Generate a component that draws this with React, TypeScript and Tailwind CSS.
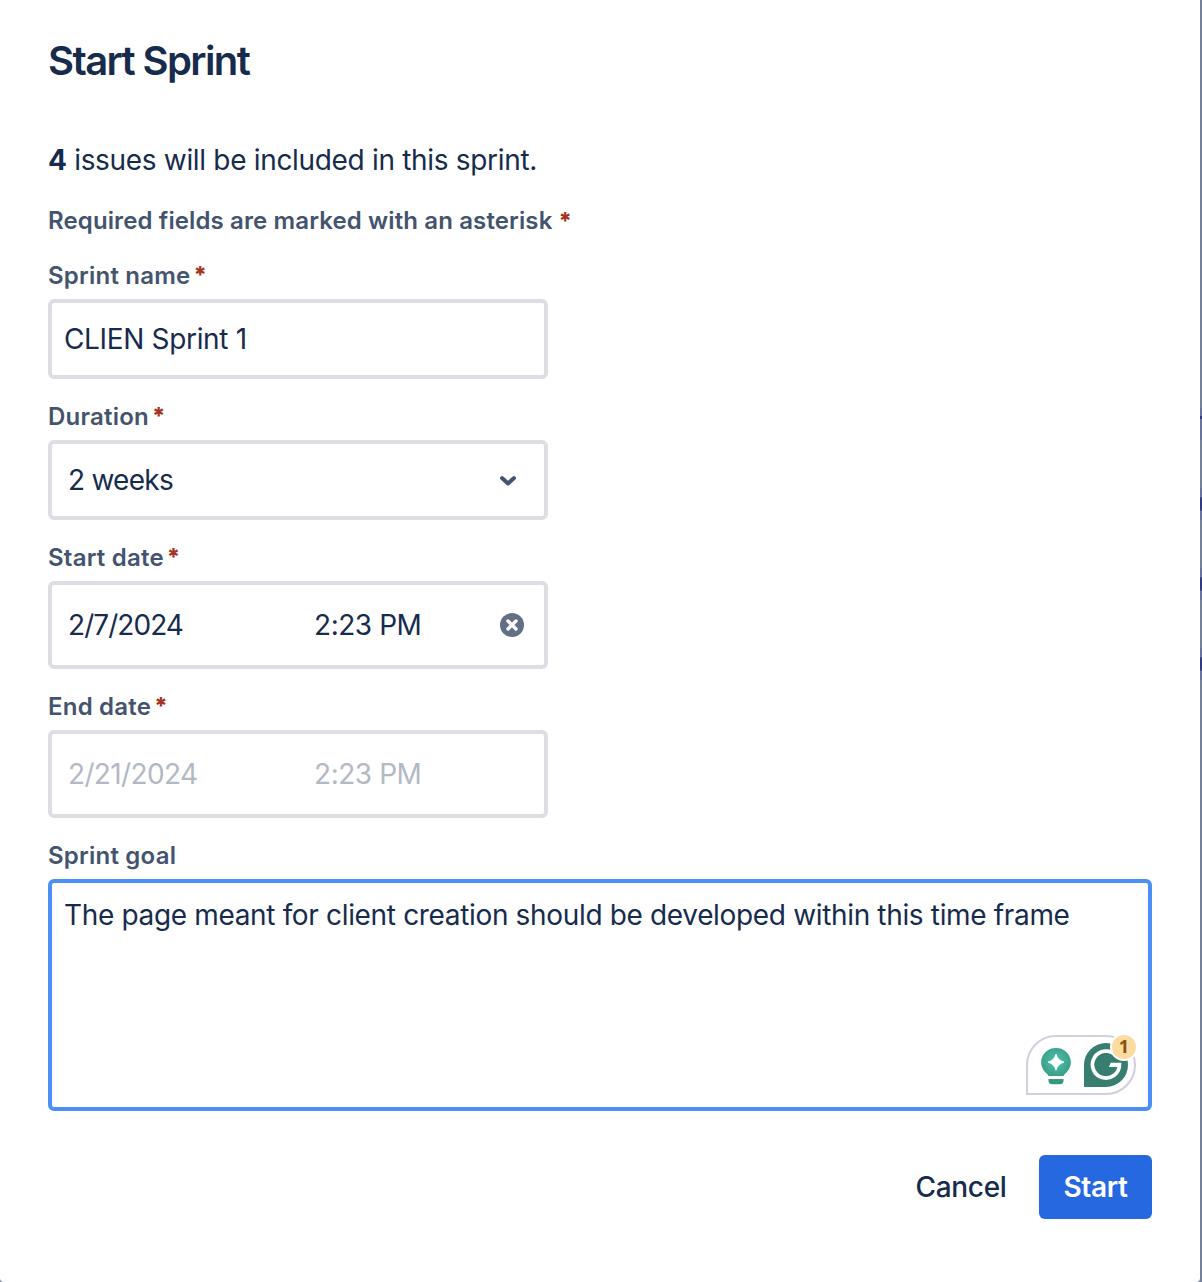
import type { ReactNode } from "react";

function Asterisk() {
  return <span className="text-[23px] font-extrabold text-[#a33322]">*</span>;
}

function Label({ children, required = true }: { children: ReactNode; required?: boolean }) {
  return (
    <div className="flex h-6 items-center whitespace-nowrap pt-0.5 text-[24px] font-semibold leading-6 tracking-[0.22px] text-[#44546f]">
      {children}
      {required && <span className="-mt-[3px] ml-[3px] flex"><Asterisk /></span>}
    </div>
  );
}

function Field({ label, children }: { label: string; children: ReactNode }) {
  return (
    <div className="flex flex-col gap-3">
      <Label>{label}</Label>
      {children}
    </div>
  );
}

function Backdrop() {
  return (
    <div className="flex w-0.5 shrink-0 flex-col gap-12 bg-[#768198] pt-[408px]">
      <div className="h-8 bg-[#6a739c] pt-2">
        <div className="h-[3px] bg-[#343a80]" />
      </div>
      {[1, 2, 3].map((row) => (
        <div key={row} className="flex h-8 flex-col justify-center bg-[#6a739c]">
          <div className="h-[14px] rounded-l-full bg-[#343a80]" />
        </div>
      ))}
    </div>
  );
}

function Assistant() {
  return (
    <div className="absolute bottom-3 right-3 flex h-[60px] w-[110px] items-center rounded-[30px] rounded-bl-none border-2 border-[#cfd0dd] bg-white">
      <svg className="ml-2.5 h-11 w-9 overflow-visible" viewBox="0 0 36 44">
        <defs>
          <radialGradient id="bulb" cx="50%" cy="48%" r="55%">
            <stop offset="0" stopColor="#50c5ab" />
            <stop offset="1" stopColor="#399d86" />
          </radialGradient>
        </defs>
        <path d="M18 5C9.5 5 3.2 11.3 3.2 19.2c0 5 2.4 8.5 5.4 11.2 1 .9 1.6 1.700 1.900 2.600h15c.3-.9.9-1.700 1.900-2.600 3-2.700 5.400-6.200 5.400-11.200C32.800 11.300 26.500 5 18 5Z" fill="url(#bulb)" />
        <path d="M18 11.200Q19.600 17.600 26 19.200Q19.600 20.800 18 27.200Q16.400 20.800 10 19.200Q16.400 17.600 18 11.200Z" fill="white" stroke="white" strokeWidth="1" strokeLinejoin="round" />
        <path d="M10.500 36h15v1.500a3.800 3.800 0 0 1-3.800 3.800h-7.400a3.800 3.800 0 0 1-3.800-3.800Z" fill="#399580" />
      </svg>
      <svg className="ml-2.5 size-11" viewBox="0 0 44 44">
        <path d="M22 0a22 22 0 0 1 0 44H0V22A22 22 0 0 1 22 0Z" fill="#377e70" />
        <path d="M32 12.500A13.500 13.500 0 1 0 35.500 21.500" fill="none" stroke="white" strokeWidth="3.700" />
        <path d="M26.700 19.700H37.500L36.500 24H25Z" fill="white" />
      </svg>
      <span className="absolute -right-0.5 -top-0.5 flex size-6 items-center justify-center rounded-full bg-[#fcdba0] pb-0.5 font-['Open_Sans',sans-serif] text-[18px] font-bold leading-none tracking-normal text-[#825413] ring-2 ring-white">1</span>
    </div>
  );
}

export default function App() {
  return (
    <div className="flex h-[1282px] w-[1202px] overflow-hidden bg-[#768198] font-[Inter,sans-serif] text-[28px] tracking-[-0.34px] text-[#172b4d]">
      <main className="flex min-w-0 flex-1 flex-col rounded-b-[4px] bg-white px-12 pt-[39px]">
        <h1 className="h-11 whitespace-nowrap text-[40px] font-semibold leading-[44px] tracking-[-1.6px]">Start Sprint</h1>
        <p className="mt-[57px] h-10 whitespace-nowrap leading-10 tracking-[-0.32px]"><b>4</b> issues will be included in this sprint.</p>
        <p className="mt-[25px] h-8 whitespace-nowrap text-[24px] font-semibold leading-8 tracking-[0.12px] text-[#44546f]">Required fields are marked with an asterisk <Asterisk /></p>
        <form className="mt-[26px] flex flex-col" onSubmit={(e) => e.preventDefault()}>
          <div className="flex w-[500px] flex-col gap-[25px]">
            <Field label="Sprint name">
              <div className="flex h-20 items-center rounded-md border-4 border-[#dddee4] pl-3">CLIEN Sprint 1</div>
            </Field>
            <Field label="Duration">
              <div className="flex h-20 items-center justify-between rounded-md border-4 border-[#dddee4] pl-4 pr-[27px]">
                <span className="tracking-[-0.75px]">2 weeks</span>
                <svg className="h-4 w-[18px]" viewBox="0 0 18 16" fill="none" stroke="#44546f" strokeWidth="4" strokeLinecap="round" strokeLinejoin="round"><path d="M3 6L9 11.500L15 6" /></svg>
              </div>
            </Field>
            <Field label="Start date">
              <div className="flex h-[88px] items-center rounded-md border-4 border-[#dddee4] pl-4 pr-5">
                <span className="w-[246px] tracking-[-0.95px]">2/7/2024</span>
                <span className="tracking-[-0.45px]">2:23 PM</span>
                <svg className="ml-auto size-6" viewBox="0 0 24 24"><circle cx="12" cy="12" r="12" fill="#626f86" /><path d="M8 8l8 8M16 8l-8 8" stroke="white" strokeWidth="3.400" strokeLinecap="round" /></svg>
              </div>
            </Field>
            <Field label="End date">
              <div className="flex h-[88px] items-center rounded-md border-4 border-[#dddee4] pl-4 text-[#b3b9c4]">
                <span className="w-[246px] tracking-[-0.65px]">2/21/2024</span>
                <span className="tracking-[-0.45px]">2:23 PM</span>
              </div>
            </Field>
          </div>
          <div className="mt-[25px] flex flex-col gap-3">
            <Label required={false}>Sprint goal</Label>
            <div className="relative h-[232px] rounded-md border-4 border-[#4c8ff6] px-3 pt-3">
              <p className="whitespace-nowrap leading-10">The page meant for client creation should be developed within this time frame</p>
              <Assistant />
            </div>
          </div>
          <div className="mt-11 flex justify-end gap-2 font-medium">
            <button className="h-16 w-[140px]">Cancel</button>
            <button className="h-16 w-[113px] rounded-md bg-[#2568df] font-semibold text-white">Start</button>
          </div>
        </form>
      </main>
      <Backdrop />
    </div>
  );
}
